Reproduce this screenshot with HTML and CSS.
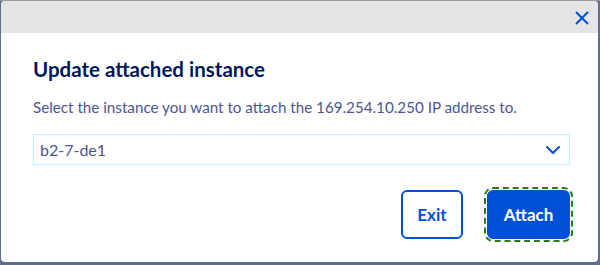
FILE: index.html
```html
<!DOCTYPE html>
<html lang="en">
<head>
<meta charset="utf-8">
<title>Update attached instance</title>
<link rel="stylesheet" href="styles.css">
</head>
<body>
<div class="modal">
  <div class="modal-header">
    <button class="close" aria-label="Close">
      <svg width="14" height="14" viewBox="0 0 14 14"><path d="M1.5 1.5 L12.5 12.5 M12.5 1.5 L1.5 12.5" stroke="#0050d7" stroke-width="2" fill="none" stroke-linecap="round"/></svg>
    </button>
  </div>
  <div class="modal-body">
    <h2 class="title">Update attached instance</h2>
    <p class="desc">Select the instance you want to attach the 169.254.10.250 IP address to.</p>
    <div class="select">
      <span class="select-value">b2-7-de1</span>
      <svg class="chevron" width="14" height="8" viewBox="0 0 14 8"><path d="M1 1 L7 7 L13 1" stroke="#0050d7" stroke-width="2" fill="none" stroke-linecap="round" stroke-linejoin="round"/></svg>
    </div>
    <div class="actions">
      <button class="btn btn-secondary">Exit</button>
      <button class="btn btn-primary">Attach</button>
    </div>
  </div>
</div>
</body>
</html>
```
FILE: styles.css
```css
html, body {
  margin: 0;
  padding: 0;
}
body {
  width: 600px;
  height: 265px;
  background: #5f6d8e;
  border-top: 1px solid #9a9a9a;
  box-sizing: border-box;
  padding: 0 2px 0 1px;
  font-family: "Source Sans Pro", Lato, "Liberation Sans", sans-serif;
  overflow: hidden;
}
.modal {
  background: #fff;
  border-radius: 4px;
  height: 261px;
  overflow: hidden;
  display: flex;
  flex-direction: column;
}
.modal-header {
  height: 32px;
  background: #e5e5e5;
  display: flex;
  justify-content: flex-end;
  align-items: center;
  padding-right: 9px;
}
.close {
  background: none;
  border: 0;
  padding: 0;
  width: 14px;
  height: 14px;
  display: flex;
  margin-top: 1px;
}
.modal-body {
  padding: 0 28px 0 32px;
}
.title {
  margin: 23px 0 0 0;
  font-size: 20.5px;
  line-height: 26px;
  font-weight: 700;
  color: #00185e;
}
.desc {
  margin: 14px 0 0 0;
  font-size: 15.2px;
  line-height: 22px;
  color: #4d5592;
}
.select {
  margin-top: 16px;
  height: 31px;
  box-sizing: border-box;
  border: 1px solid #bef1ff;
  display: flex;
  align-items: center;
  justify-content: space-between;
  padding: 0 9px 0 6px;
}
.select-value {
  font-size: 16px;
  color: #4d5592;
}
.chevron {
  display: block;
}
.actions {
  margin-top: 25px;
  display: flex;
  justify-content: flex-end;
  gap: 24px;
}
.btn {
  height: 49px;
  box-sizing: border-box;
  border-radius: 6px;
  font-family: inherit;
  font-size: 17px;
  font-weight: 700;
  cursor: pointer;
}
.btn-secondary {
  width: 62px;
  background: #fff;
  border: 2px solid #0050d7;
  color: #0050d7;
}
.btn-primary {
  width: 83px;
  background: #0050d7;
  border: 2px solid #0050d7;
  color: #fff;
  outline: 2px dashed #2c7d0b;
  outline-offset: 1px;
}
```
